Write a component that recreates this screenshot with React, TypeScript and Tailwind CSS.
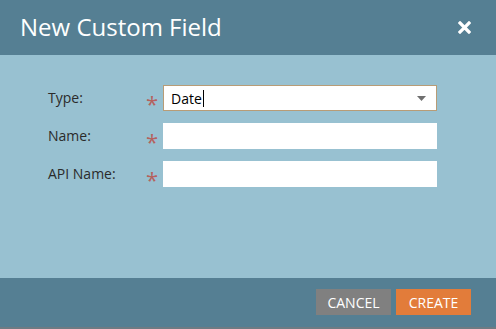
import React from "react";

const font = { fontFamily: '"Open Sans", "Noto Sans", sans-serif' };

function Row({ label, children }: { label: string; children?: React.ReactNode }) {
  return (
    <div className="flex items-center h-[26px]">
      <div className="w-[98px] text-[14px] text-[#2b2b2b] leading-none">{label}</div>
      <div className="w-[17px] text-[22px] leading-none text-[#b5615e] pt-[10px]">*</div>
      <div className="w-[274px] h-[26px]">{children}</div>
    </div>
  );
}

export default function App() {
  return (
    <div className="w-[496px] h-[329px] flex flex-col bg-[#98c1d1]" style={font}>
      <div className="h-[55px] bg-[#557f93] flex items-center justify-between pl-[20px] pr-[25px]">
        <div className="text-white text-[24px] leading-none pb-[1px]">New Custom Field</div>
        <svg width="13" height="13" viewBox="0 0 13 13">
          <path d="M2 2 L11 11 M11 2 L2 11" stroke="white" strokeWidth="3.2" strokeLinecap="square" />
        </svg>
      </div>
      <div className="flex-1 pt-[30px] pl-[48px] flex flex-col gap-[12px]">
        <Row label="Type:">
          <div className="h-full bg-white border border-[#b89c76] flex items-center justify-between pl-[7px] pr-[10px]">
            <div className="flex items-center text-[14px] text-black">
              Date<span className="inline-block w-[1px] h-[17px] bg-black ml-[1px]" />
            </div>
            <svg width="9" height="5" viewBox="0 0 9 5">
              <path d="M0 0 H9 L4.5 5 Z" fill="#6f6f6f" />
            </svg>
          </div>
        </Row>
        <Row label="Name:">
          <div className="h-full bg-white" />
        </Row>
        <Row label="API Name:">
          <div className="h-full bg-white" />
        </Row>
      </div>
      <div className="h-[51px] bg-[#557f93] flex flex-col">
        <div className="flex-1 flex items-center justify-end gap-[5px] pr-[25px] pb-[1px]">
          <div className="w-[75px] h-[26px] bg-[#808080] text-white text-[14px] flex items-center justify-center">CANCEL</div>
          <div className="w-[75px] h-[26px] bg-[#e27c3a] text-white text-[14px] flex items-center justify-center">CREATE</div>
        </div>
        <div className="h-[2px] bg-[#6e7b83]" />
      </div>
    </div>
  );
}
